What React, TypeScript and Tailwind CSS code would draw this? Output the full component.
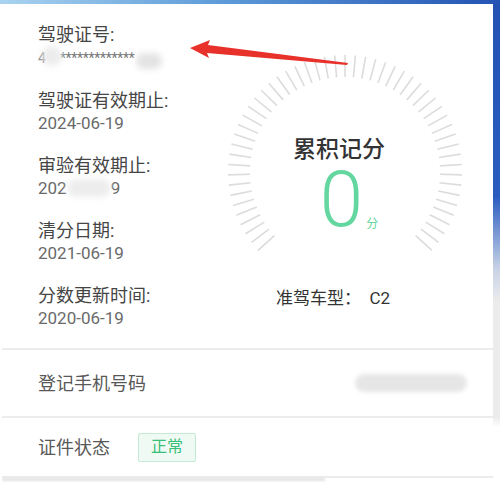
import React from "react";

const ticks = Array.from({ length: 53 }, (_, i) => -132 + (264 / 52) * i);

function Gauge() {
  // centre of the dial sits at (120,120) in svg space
  return (
    <svg width="240" height="206" viewBox="0 0 240 206">
      {ticks.map((a) => {
        const r = (a * Math.PI) / 180;
        const x1 = 120 + Math.sin(r) * 95;
        const y1 = 120 - Math.cos(r) * 95;
        const x2 = 120 + Math.sin(r) * 117;
        const y2 = 120 - Math.cos(r) * 117;
        return (
          <line key={a} x1={x1} y1={y1} x2={x2} y2={y2} stroke="#dcdcdc" strokeWidth="1.6" />
        );
      })}
    </svg>
  );
}

function Field({ label, value }: { label: string; value: React.ReactNode }) {
  return (
    <div className="flex flex-col">
      <span className="text-[18px] leading-[22px] text-[#454545]">{label}</span>
      <span className="text-[17px] leading-[22px] text-[#6a6a6a]">{value}</span>
    </div>
  );
}

export default function App() {
  return (
    <div className="w-[500px] h-[485px] flex flex-col overflow-hidden bg-white font-['Roboto','Noto_Sans_CJK_SC',sans-serif] relative">
      {/* blue strip on top */}
      <div className="h-[4px] bg-[linear-gradient(to_right,#a9d3f0,#5c9ad8_45%,#2453b4)]" />

      <div className="flex flex-1">
        <div className="flex-1 flex flex-col ml-[2px] bg-[#ececec] gap-[2px] rounded-tr-md overflow-hidden">
          {/* main card */}
          <div className="h-[344px] bg-white flex">
            <div className="w-[223px] pl-[36px] pt-[20px] flex flex-col gap-[21px]">
              <Field
                label="驾驶证号:"
                value={
                  <span className="relative inline-flex items-center text-[14px]">
                    <span className="text-[#888]">4</span>
                    <span className="w-[20px] h-[20px] rounded-full bg-[#ececec] blur-[3px] -ml-[4px] mt-[-4px]" />
                    <span className="-ml-[2px] tracking-[-0.3px] text-[#777]">*************</span>
                    <span className="w-[26px] h-[16px] rounded-full bg-[#e3e3e3] blur-[3px] ml-[2px] mt-[6px]" />
                  </span>
                }
              />
              <Field label="驾驶证有效期止:" value="2024-06-19" />
              <Field
                label="审验有效期止:"
                value={
                  <span className="inline-flex items-center">
                    <span>202</span>
                    <span className="w-[44px] h-[18px] rounded-full bg-[#ededed] blur-[3px]" />
                    <span>9</span>
                  </span>
                }
              />
              <Field label="清分日期:" value="2021-06-19" />
              <Field label="分数更新时间:" value="2020-06-19" />
            </div>

            <div className="w-[240px] flex flex-col">
              <div className="relative mt-[48px]">
                <Gauge />
                <div className="absolute left-0 right-0 top-[80px] flex flex-col items-center">
                  <span className="mr-[12px] text-[23px] leading-[30px] font-medium text-[#333] font-['Noto_Sans_CJK_SC',sans-serif]">
                    累积记分
                  </span>
                  <div className="flex items-end mt-[8px]">
                    <span className="text-[78px] leading-[60px] font-light text-[#64d6a0] font-['Roboto',sans-serif] ml-[8px]">
                      0
                    </span>
                    <span className="text-[12px] leading-[16px] text-[#64d6a0] -mb-[2px] ml-[3px]">分</span>
                  </div>
                </div>
              </div>
              <div className="mt-[29px] pl-[51px] text-[17px] leading-[22px] text-[#333]">
                准驾车型：&nbsp;&nbsp;C2
              </div>
            </div>
          </div>

          {/* phone row */}
          <div className="h-[66px] bg-white flex items-center justify-between pl-[36px] pr-[26px]">
            <span className="text-[18px] text-[#585858]">登记手机号码</span>
            <span className="w-[112px] h-[18px] rounded-full bg-[#e6e6e6] blur-[2px]" />
          </div>

          {/* status row */}
          <div className="h-[58px] bg-white flex items-center pl-[36px] gap-[28px]">
            <span className="text-[18px] text-[#585858]">证件状态</span>
            <span className="h-[29px] px-[12px] flex items-center border border-[#c4ead4] bg-[#f0faf4] text-[#38bf78] text-[16px] rounded-[2px]">
              正常
            </span>
          </div>

          <div className="flex-1 bg-white flex">
            <div className="w-[323px] h-[3px] bg-[#e2e2e2] blur-[1px]" />
          </div>
        </div>

        {/* right edge strip */}
        <div className="w-[7px] bg-[linear-gradient(to_bottom,#2352b3,#2a5cc0_40%,#c7d2e6_55%,#ececec_62%,#ececec_86%,#ffffff_88%)]" />
      </div>

      {/* red arrow pointing at the licence number */}
      <svg className="absolute left-0 top-0 pointer-events-none" width="500" height="485">
        <polygon points="190,48 210,40 208,45 348,63 347,65 207,53 209,58" fill="#e8312b" />
      </svg>
    </div>
  );
}
